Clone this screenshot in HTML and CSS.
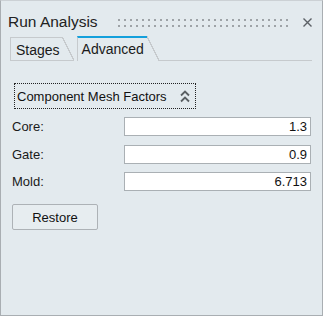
FILE: index.html
```html
<!DOCTYPE html>
<html lang="en">

<head>
    <meta charset="UTF-8">
    <title>Run Analysis</title>
    <link rel="stylesheet" href="styles.css">
</head>

<body>

    <div class="panel">
        <div class="titlebar">
            <span class="title">Run Analysis</span>
            <svg class="grip" width="170" height="8" viewBox="0 0 170 8">
                <defs>
                    <pattern id="grip-dots" width="6" height="6" patternUnits="userSpaceOnUse">
                        <rect width="2" height="2" fill="#9ea3a7" />
                    </pattern>
                </defs>
                <rect width="170" height="8" fill="url(#grip-dots)" />
            </svg>
            <svg class="close" width="10" height="10" viewBox="0 0 10 10">
                <path d="M1.5 1.5 L9.5 9.5 M9.5 1.5 L1.5 9.5" stroke="#5c6166" stroke-width="1.4" fill="none" />
            </svg>
        </div>

        <div class="tabs">
            <div class="tab">
                <span class="tab-label">Stages</span>
                <span class="tab-slant"></span>
            </div>
            <div class="tab active">
                <span class="tab-label">Advanced</span>
                <span class="tab-slant"></span>
            </div>
            <div class="tab-fill"></div>
        </div>

        <div class="content">
            <button class="section-header">
                <span>Component Mesh Factors</span>
                <svg width="10" height="13" viewBox="0 0 10 13">
                    <path d="M1 5.5 L5 1.5 L9 5.5 M1 11.5 L5 7.5 L9 11.5" stroke="#5a5f63" stroke-width="1.8" fill="none" />
                </svg>
            </button>

            <div class="fields">
                <label>Core:</label>
                <input type="text" value="1.3">
                <label>Gate:</label>
                <input type="text" value="0.9">
                <label>Mold:</label>
                <input type="text" value="6.713">
            </div>

            <button class="restore-btn">Restore</button>
        </div>
    </div>

</body>

</html>
```

FILE: styles.css
```css
body {
    margin: 0;
    padding: 0;
    font-family: 'Liberation Sans', Arial, sans-serif;
    color: #1a1a1a;
}

.panel {
    width: 323px;
    height: 316px;
    box-sizing: border-box;
    border: 1px solid #a9aeb2;
    border-top-color: #ccd1d5;
    background-color: #e3eaee;
}

.titlebar {
    display: flex;
    align-items: center;
    height: 28px;
    margin-top: 7px;
    padding-left: 7px;
}

.title {
    font-size: 15.5px;
    color: #222;
}

.grip {
    margin-left: auto;
    margin-top: 2px;
}

.close {
    margin-left: 14px;
    margin-right: 10px;
}

.tabs {
    display: flex;
    align-items: flex-end;
    height: 25px;
    margin: 0 10px 0 9px;
}

.tab {
    display: flex;
    height: 24px;
    box-sizing: border-box;
    border-bottom: 1px solid #c6cacd;
}

.tab-label {
    border-left: 1px solid #c6cacd;
    border-top: 1px solid #c6cacd;
    padding: 4px 2px 0 5px;
    font-size: 14px;
    line-height: 16px;
}

.tab-slant {
    width: 12px;
    background: linear-gradient(to top right,
            transparent calc(50% - 0.7px),
            #c6cacd calc(50% - 0.7px),
            #c6cacd calc(50% + 0.7px),
            transparent calc(50% + 0.7px));
}

.tab.active {
    height: 25px;
    margin-left: 3px;
    border-bottom: none;
}

.tab.active .tab-label {
    border-top: 2px solid #14a0dc;
    padding: 3px 3px 0 4px;
}

.tab-fill {
    flex: 1;
    height: 25px;
    box-sizing: border-box;
    border-bottom: 1px solid #c6cacd;
}

.content {
    padding: 22px 10px 0 11px;
}

.section-header {
    display: flex;
    align-items: center;
    justify-content: space-between;
    width: 182px;
    height: 26px;
    box-sizing: border-box;
    margin: 0 0 0 2px;
    padding: 0 5px 0 2px;
    border: 1px dotted #222;
    background: none;
    font-family: inherit;
    font-size: 13px;
    color: #111;
}

.fields {
    display: grid;
    grid-template-columns: 112px 187px;
    grid-auto-rows: 19px;
    row-gap: 8.5px;
    margin-top: 8px;
}

.fields label {
    align-self: center;
    font-size: 13px;
}

.fields input {
    width: 187px;
    height: 19px;
    box-sizing: border-box;
    margin: 0;
    padding: 0 3px;
    border: 1px solid #aab0b4;
    background-color: #ffffff;
    font-family: inherit;
    font-size: 13px;
    color: #111;
    text-align: right;
}

.restore-btn {
    display: block;
    width: 86px;
    height: 26px;
    margin: 13px 0 0 0;
    padding: 0;
    border: 1px solid #adb2b6;
    border-radius: 2px;
    background-color: #e7edf0;
    font-family: inherit;
    font-size: 13px;
    color: #111;
}
```
